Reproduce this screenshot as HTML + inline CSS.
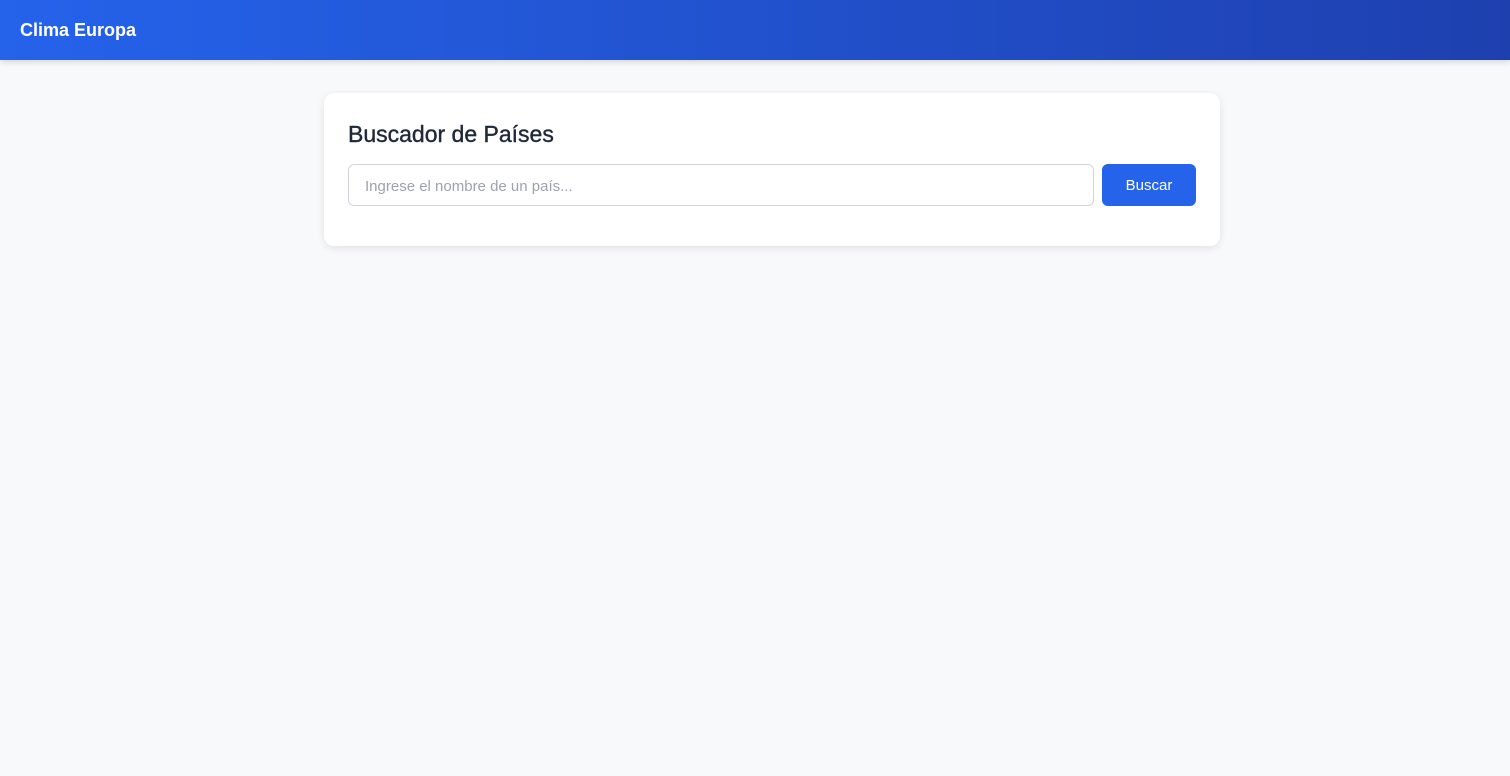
<!DOCTYPE html>
<html><head><meta charset="utf-8"><style>
*{box-sizing:border-box;margin:0;padding:0}
body{width:1510px;height:776px;background:#f8f9fb;font-family:"Liberation Sans",sans-serif;overflow:hidden}
.nav{height:60px;background:linear-gradient(90deg,#2563eb,#1e40af);box-shadow:0 2px 6px rgba(0,0,0,.15);color:#fff;font-weight:bold;font-size:18px;padding:20px 20px}
.card{position:absolute;left:324px;top:93px;width:896px;height:153px;background:#fff;border-radius:10px;box-shadow:0 2px 8px rgba(0,0,0,.1)}
h1{position:absolute;left:24px;top:28px;font-size:23px;font-weight:normal;color:#1e293b;-webkit-text-stroke:.4px #1e293b}
.in{position:absolute;left:24px;top:71px;width:746px;height:42px;border:1px solid #d1d5db;border-radius:6px;color:#9ca3af;font-size:15px;padding:13px 16px}
.btn{position:absolute;left:778px;top:71px;width:94px;height:42px;background:#2563eb;border-radius:6px;color:#fff;font-size:15px;text-align:center;line-height:44px}
</style></head><body>
<div class="nav">Clima Europa</div>
<div class="card"><h1>Buscador de Países</h1><div class="in">Ingrese el nombre de un país...</div><div class="btn">Buscar</div></div>
</body></html>
